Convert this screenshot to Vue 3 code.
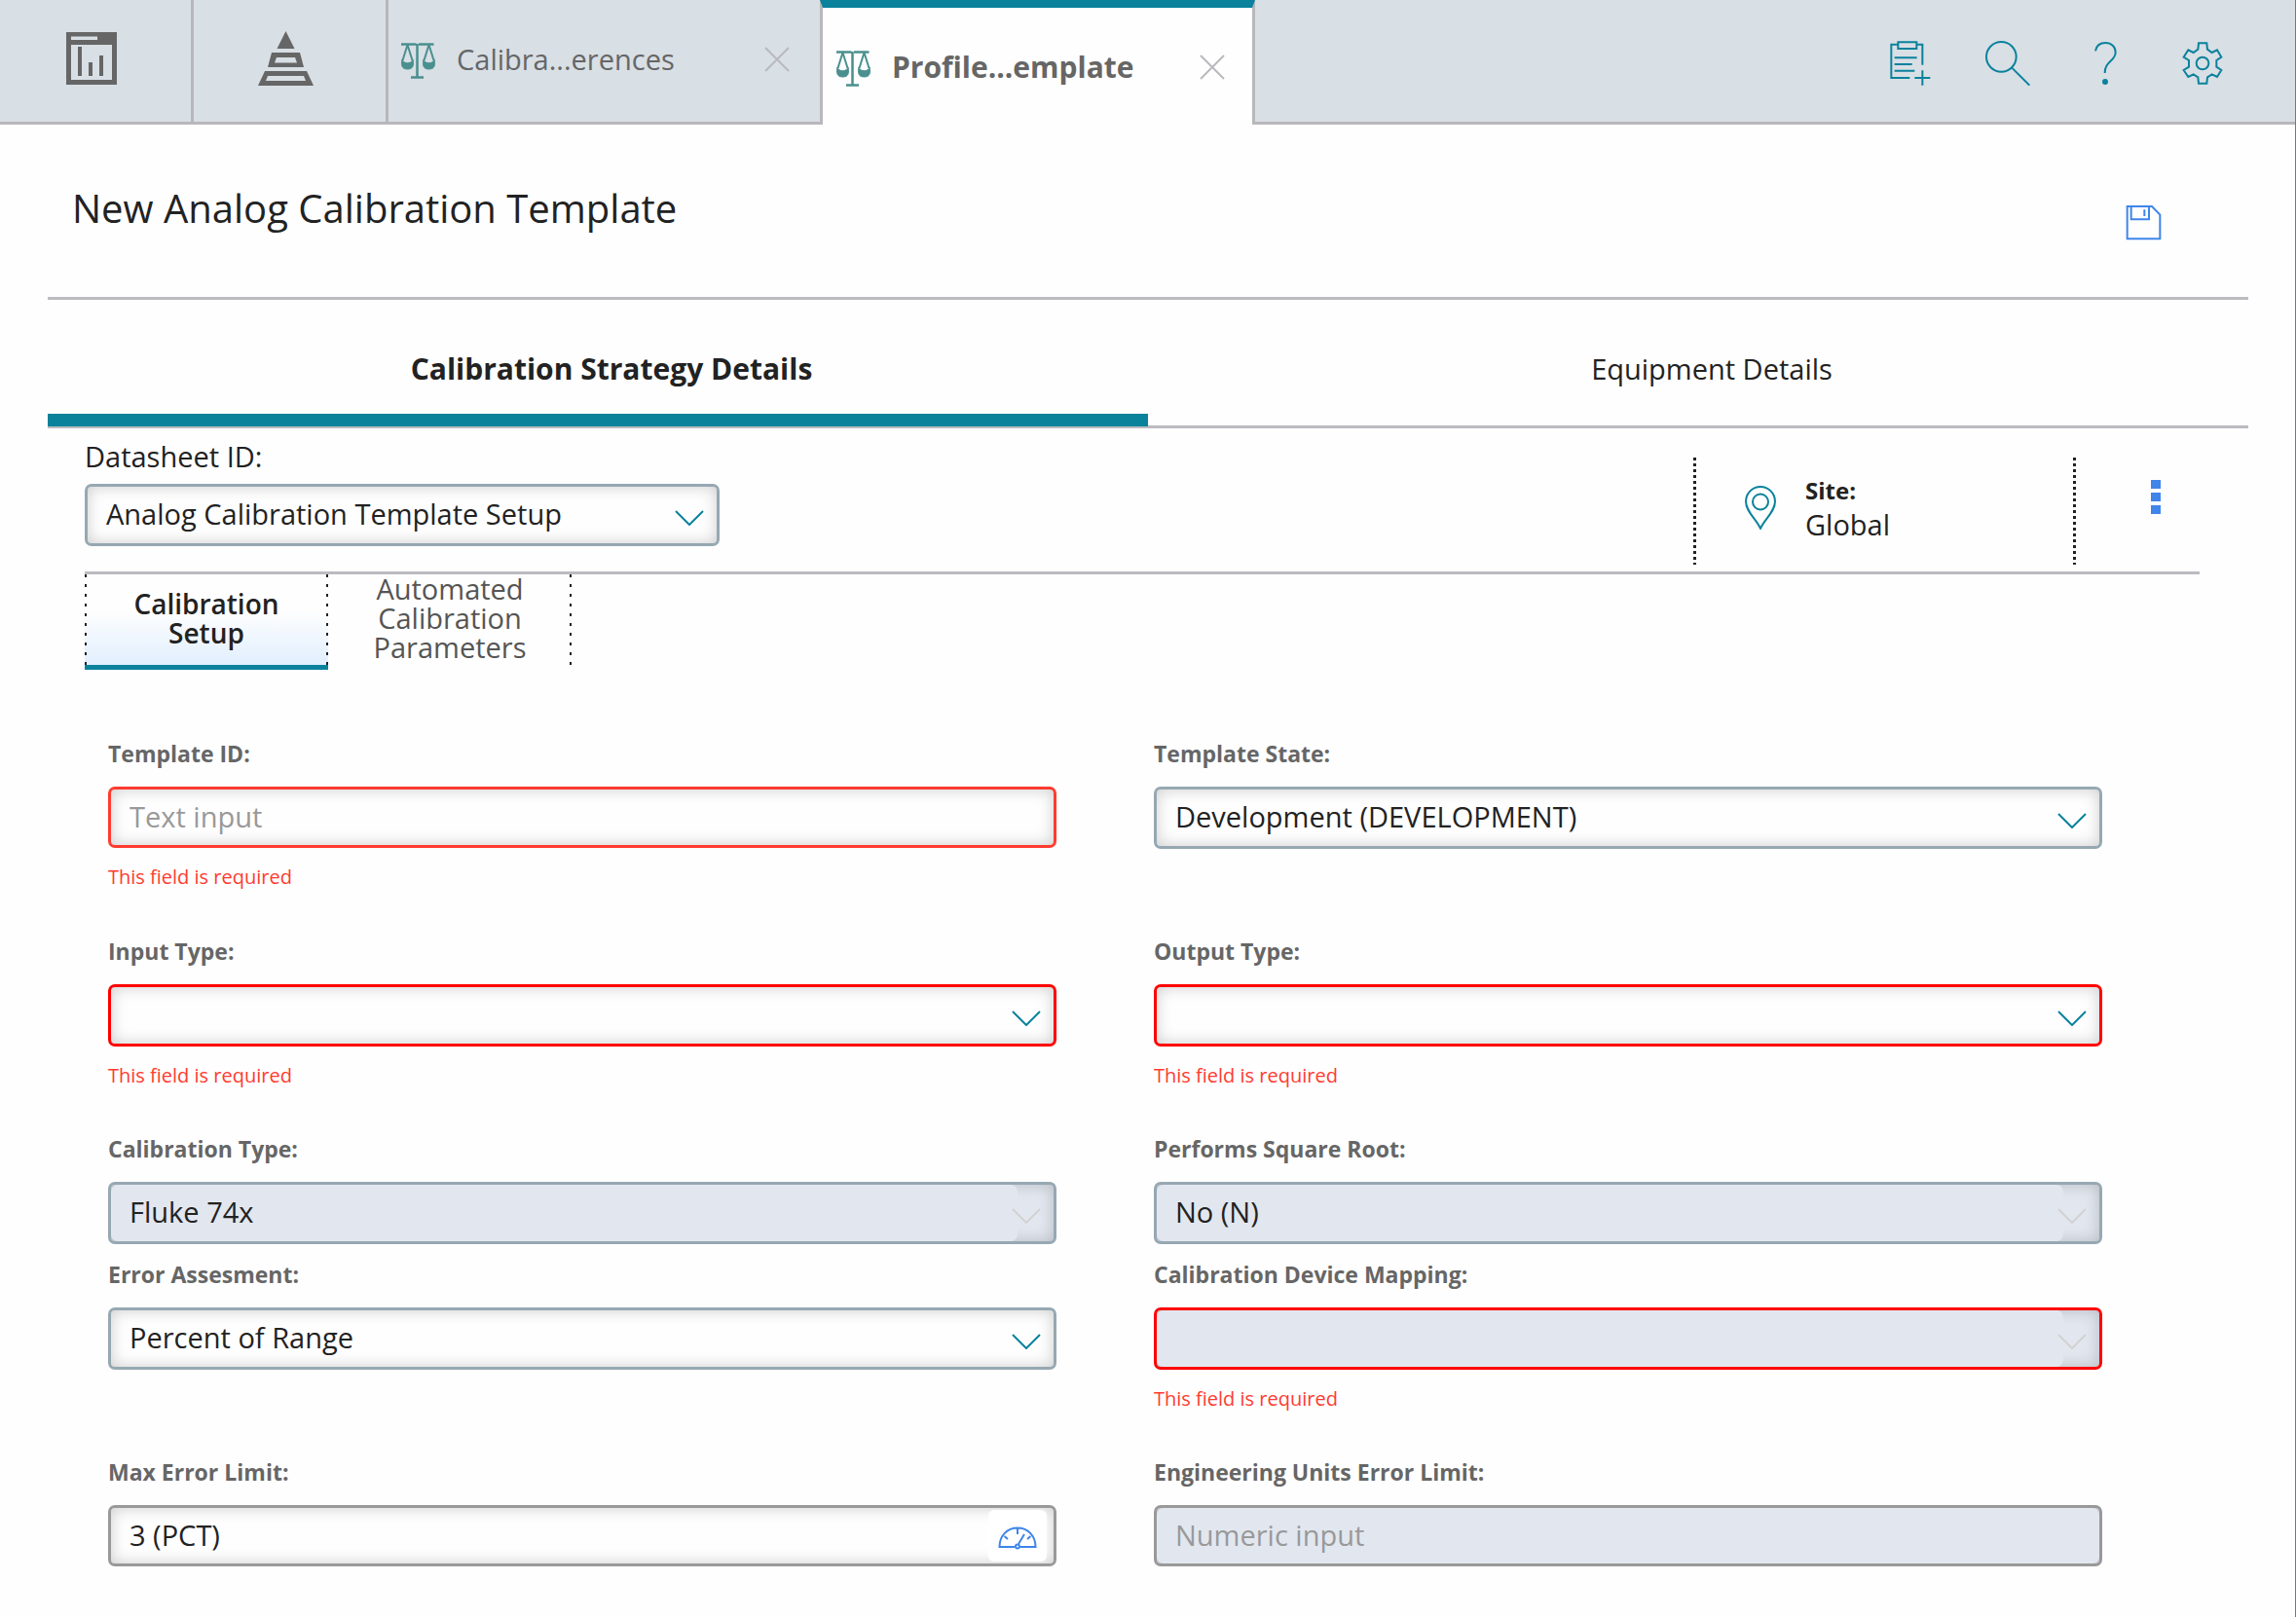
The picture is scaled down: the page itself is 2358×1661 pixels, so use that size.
<script setup>
import { reactive } from 'vue'

const REQUIRED = 'This field is required'

const fields = reactive([
  { id: 'template-id', label: 'Template ID:', kind: 'text', value: '', placeholder: 'Text input', tone: 'invalid', error: REQUIRED, note: true },
  { id: 'template-state', label: 'Template State:', kind: 'select', value: 'Development (DEVELOPMENT)', note: true },
  { id: 'input-type', label: 'Input Type:', kind: 'select', value: '', tone: 'missing', error: REQUIRED, note: true },
  { id: 'output-type', label: 'Output Type:', kind: 'select', value: '', tone: 'missing', error: REQUIRED, note: true },
  { id: 'calibration-type', label: 'Calibration Type:', kind: 'select', value: 'Fluke 74x', disabled: true },
  { id: 'square-root', label: 'Performs Square Root:', kind: 'select', value: 'No (N)', disabled: true },
  { id: 'error-assessment', label: 'Error Assesment:', kind: 'select', value: 'Percent of Range', note: true },
  { id: 'device-mapping', label: 'Calibration Device Mapping:', kind: 'select', value: '', tone: 'missing', disabled: true, error: REQUIRED, note: true },
  { id: 'max-error', label: 'Max Error Limit:', kind: 'text', value: '3 (PCT)', placeholder: '', tone: 'plain', gauge: true },
  { id: 'unit-error', label: 'Engineering Units Error Limit:', kind: 'text', value: '', placeholder: 'Numeric input', tone: 'plain', disabled: true },
])
</script>

<template>
  <div class="page">
    <header class="topbar">
      <button class="home-tab first" type="button" aria-label="Dashboard">
        <svg width="52" height="54" viewBox="0 0 52 54" fill="#666">
          <path fill-rule="evenodd" d="M0 0H52V54H0ZM5 4.500V8H32V4.500ZM5 13V49H47V13Z" />
          <path d="M12 15h4v30h-4zM23 31h4v14h-4zM34 24h4v21h-4z" />
        </svg>
      </button>
      <button class="home-tab" type="button" aria-label="Hierarchy">
        <svg width="57" height="56" viewBox="0 0 57 56" fill="#666">
          <path d="M28.500 0L37.500 18H19.500Z" />
          <path fill-rule="evenodd" d="M14 22H43L47 37H10ZM19 27L17 32.500H40L38 27Z" />
          <path fill-rule="evenodd" d="M7 41H50L57 56H0ZM10 46L8 51H49L47 46Z" />
        </svg>
      </button>
      <div v-for="tab in ['Calibra...erences', 'Profile...emplate']" :key="tab" class="doc-tab" :class="{ current: tab.startsWith('Profile') }">
        <button class="doc-name" type="button">
          <svg width="36" height="37" viewBox="0 0 36 37" fill="none" stroke="#4a908f" stroke-width="2.500">
            <path d="M0 1.500H15.500M18 1.500H33.500M16.500 1V35M10 35.500H23" />
            <path stroke-width="2" d="M6.500 2L1.500 18M6.500 2L11.500 18M28.500 2L23.500 18M28.500 2L33.500 18" />
            <path fill="#4a908f" stroke-width="1" d="M1 17C0 22 0 27 6.500 27S13 22 12 17C11 22 2 22 1 17ZM23 17C22 22 22 27 28.500 27S35 22 34 17C33 22 24 22 23 17Z" />
          </svg>
          <span>{{ tab }}</span>
        </button>
        <button class="close" type="button" aria-label="Close tab">
          <svg width="26" height="26" viewBox="0 0 26 26" fill="none" stroke="#b9b9be" stroke-width="2">
            <path d="M1 1L25 25M25 1L1 25" />
          </svg>
        </button>
      </div>
      <nav class="tools">
        <button type="button" aria-label="New record">
          <svg width="42" height="46" viewBox="122 126 126 138">
            <path d="M144 137H126V240H183M205 137H222V200M147 129.500H204V150H147ZM136 178H205M136 198H190M136 218H198M222 217V263M198 240H246" />
          </svg>
        </button>
        <button type="button" aria-label="Search">
          <svg width="46" height="46" viewBox="416 126 138 138">
            <circle cx="465" cy="175" r="46" />
            <path d="M497 208L552 263" />
          </svg>
        </button>
        <button type="button" aria-label="Help">
          <svg width="24" height="46" viewBox="748 126 72 138">
            <path d="M754 157C757 140 770 132 785 132C803 132 816 144 816 161C816 188 783 188 783 225" />
            <circle cx="784" cy="252" r="6" fill="#0a829c" />
          </svg>
        </button>
        <button type="button" aria-label="Settings">
          <svg width="42" height="44" viewBox="1022 129 126 132">
            <path d="M1073 133H1098L1100 152L1114 162L1130 154L1143 176L1128 186V206L1143 216L1130 237L1114 229L1100 238L1098 257H1073L1071 238L1057 229L1041 237L1027 216L1043 206V186L1027 176L1041 154L1057 162L1071 152Z" />
            <circle cx="1085" cy="195" r="19" />
          </svg>
        </button>
      </nav>
    </header>

    <main>
      <div class="heading">
        <h1>New Analog Calibration Template</h1>
        <button class="save" type="button" aria-label="Save">
          <svg width="37" height="36" viewBox="850 632 111 108" fill="none" stroke="#3f85ea" stroke-width="6">
            <path d="M855 635H931L956 661V735H855ZM867 638V675H922V638M908 645V665" />
          </svg>
        </button>
      </div>

      <div class="main-tabs">
        <button class="active" type="button">Calibration Strategy Details</button>
        <button type="button">Equipment Details</button>
      </div>

      <div class="sheet">
        <div class="sheet-bar">
          <div class="sheet-pick">
            <label for="datasheet">Datasheet ID:</label>
            <div class="box">
              <select id="datasheet"><option>Analog Calibration Template Setup</option></select>
              <svg class="chevron" width="30" height="16" viewBox="0 0 30 16"><path d="M1 1L15 15L29 1" /></svg>
            </div>
          </div>
          <div class="sheet-side">
            <div class="site">
              <svg width="32" height="45" viewBox="0 0 32 45" fill="none" stroke="#0a829c" stroke-width="2">
                <path d="M16 44C12 34 1 27 1 16A15 15 0 0 1 31 16C31 27 20 34 16 44Z" />
                <circle cx="16" cy="16.500" r="8" />
              </svg>
              <div class="site-text"><strong>Site:</strong><span>Global</span></div>
            </div>
            <button class="more" type="button" aria-label="More actions">
              <svg width="10" height="36" viewBox="0 0 10 36" fill="#3f85ea"><path d="M0 0H10V9H0ZM0 13H10V22H0ZM0 26H10V35H0Z" /></svg>
            </button>
          </div>
        </div>

        <div class="sub-tabs">
          <button class="active" type="button">Calibration Setup</button>
          <button type="button">Automated Calibration Parameters</button>
        </div>

        <form class="fields" @submit.prevent>
          <div v-for="f in fields" :key="f.id" class="field" :class="{ noted: f.note }">
            <label :for="f.id">{{ f.label }}</label>
            <div class="box" :class="[f.tone, f.kind, { off: f.disabled }]">
              <template v-if="f.kind === 'select'">
                <select :id="f.id" v-model="f.value" :disabled="f.disabled"><option>{{ f.value }}</option></select>
                <svg class="chevron" width="30" height="16" viewBox="0 0 30 16"><path d="M1 1L15 15L29 1" /></svg>
              </template>
              <template v-else>
                <input :id="f.id" v-model="f.value" type="text" :placeholder="f.placeholder" :disabled="f.disabled">
                <button v-if="f.gauge" class="gauge" type="button" aria-label="Convert units">
                  <svg width="40" height="24" viewBox="0 0 40 24" fill="none" stroke="#3f85ea" stroke-width="2">
                    <path d="M17 21H1.500C1.500 10 9 1.500 20 1.500S38.500 10 38.500 21H23M20 2V8M21 18L27 8M6.500 10L10 13M33.500 10L30 13" />
                    <circle cx="20" cy="20.500" r="2" />
                  </svg>
                </button>
              </template>
            </div>
            <p v-if="f.error" class="error">{{ f.error }}</p>
          </div>
        </form>
      </div>
    </main>
  </div>
</template>

<style>
body {
  background: #fefefe;
}
</style>

<style scoped>
.page {
  --teal: #0a829c;
  --line: #bbbbc0;
  min-height: 100vh;
  box-sizing: border-box;
  border-right: 1px solid #77787a;
  background: #fefefe;
  color: #222;
  font: 29px/40px "Open Sans", sans-serif;
}
.page * {
  box-sizing: border-box;
}
button {
  display: flex;
  align-items: center;
  justify-content: center;
  padding: 0;
  border: 0;
  background: none;
  color: inherit;
  font: inherit;
  cursor: pointer;
}
svg {
  display: block;
  flex: none;
}

.topbar {
  display: flex;
  height: 128px;
  padding-right: 45px;
  border-bottom: 3px solid #b8b7bb;
  background: #d8dfe5;
}
.home-tab {
  width: 200px;
  padding: 0 8px 5px 0;
  border-right: 3px solid #b8b7bb;
}
.home-tab.first {
  width: 199px;
}
.doc-tab {
  display: flex;
  align-items: center;
  justify-content: space-between;
  width: 443px;
  padding: 0 31px 4px 13px;
  color: #666;
}
.doc-name {
  gap: 21px;
}
.doc-name svg {
  margin-top: 3px;
}
.doc-tab.current {
  width: 447px;
  margin-bottom: -3px;
  padding: 2px 28px 0 14px;
  border: 3px solid #b8b7bb;
  border-top: 8px solid var(--teal);
  border-bottom: 0;
  background: #fefefe;
  font-size: 30px;
  font-weight: 700;
}
.tools {
  display: flex;
  margin-left: auto;
}
.tools button {
  width: 100px;
  padding-top: 5px;
}
.tools svg {
  fill: none;
  stroke: var(--teal);
  stroke-width: 6px;
}

main {
  padding: 0 48px 0 49px;
}
.heading {
  display: flex;
  align-items: flex-start;
  justify-content: space-between;
  padding: 59px 66px 34px 25px;
  border-bottom: 3px solid var(--line);
}
h1 {
  margin: 0;
  font-size: 40px;
  line-height: 54px;
  font-weight: 400;
}
.save {
  width: 84px;
  height: 84px;
}

.main-tabs {
  display: flex;
  height: 132px;
  border-bottom: 3px solid var(--line);
}
.main-tabs button {
  flex: 1;
  margin-bottom: -1px;
  padding: 24px 0 0 28px;
  border-bottom: 13px solid transparent;
}
.main-tabs .active {
  border-color: var(--teal);
  font-size: 30px;
  font-weight: 700;
}

.sheet {
  padding: 0 50px 0 38px;
}
.sheet-bar {
  display: flex;
  justify-content: space-between;
  border-bottom: 3px solid var(--line);
}
.sheet-pick {
  display: flex;
  flex-direction: column;
  gap: 8px;
  width: 30%;
  padding: 9px 0 26px;
}
.sheet-side {
  display: flex;
  margin: 30px 0 7px;
}
.site {
  display: flex;
  align-items: center;
  gap: 30px;
  width: 393px;
  padding: 0 0 8px 53px;
  background:
    repeating-linear-gradient(#222 0 3px, transparent 3px 6px) left / 3px 100% no-repeat,
    repeating-linear-gradient(#222 0 3px, transparent 3px 6px) right / 3px 100% no-repeat;
}
.site-text {
  display: flex;
  flex-direction: column;
  line-height: 35px;
}
.site-text strong {
  font-size: 24px;
}
.more {
  width: 88px;
  margin-right: 39px;
  padding: 0 0 28px 76px;
}

.sub-tabs {
  display: flex;
}
.sub-tabs button {
  width: 250px;
  height: 98px;
  padding: 0 40px 3px;
  border-bottom: 5px solid transparent;
  background: repeating-linear-gradient(#222 0 3px, transparent 3px 10px) right top / 2px 100% no-repeat;
  color: #555;
  line-height: 30px;
}
.sub-tabs .active {
  border-color: var(--teal);
  background:
    repeating-linear-gradient(#222 0 3px, transparent 3px 10px) left top / 2px 100% no-repeat,
    repeating-linear-gradient(#222 0 3px, transparent 3px 10px) right top / 2px 100% no-repeat,
    linear-gradient(#fefefe 40%, #e1effe);
  color: #222;
  font-size: 28px;
  font-weight: 600;
}

.box {
  position: relative;
  display: flex;
  height: 64px;
  border: 3px solid #96a8b2;
  border-radius: 7px;
  background: #fefefe;
  box-shadow: inset 0 0 16px rgba(0, 0, 0, 0.2);
}
.box.text {
  height: 63px;
}
.box.plain {
  border-color: #999;
}
.box.invalid {
  border-color: #ff3b30;
}
.box.missing {
  border-color: #f00;
}
.box.off {
  background: #e2e7ef;
}
select,
input {
  appearance: none;
  flex: 1;
  min-width: 0;
  margin: 0;
  padding: 0 19px 2px;
  border: 0;
  border-radius: 7px;
  outline: 0;
  background: transparent;
  color: #222;
  font: inherit;
  opacity: 1;
}
input::placeholder {
  color: #999;
  opacity: 1;
}
.off select,
.off input {
  background: #e2e7ef;
}
.off select {
  margin-right: 37px;
}
.chevron {
  position: absolute;
  top: 24px;
  right: 13px;
  fill: none;
  stroke: var(--teal);
  stroke-width: 2px;
  pointer-events: none;
}
.off .chevron {
  stroke: #d2d2d2;
}
.gauge {
  width: 60px;
  margin: 2px 7px 2px 0;
  padding-top: 4px;
  border-radius: 6px;
  background: #fff;
}

.fields {
  display: grid;
  grid-template-columns: 1fr 1fr;
  column-gap: 100px;
  padding: 70px 100px 40px 24px;
}
.field {
  padding-bottom: 15px;
}
.field.noted {
  min-height: 203px;
}
.field label {
  display: block;
  margin-bottom: 18px;
  color: #666;
  font-size: 23px;
  line-height: 32px;
  font-weight: 700;
}
.error {
  margin: 16px 0 0;
  color: #ff3b30;
  font-size: 20px;
  line-height: 28px;
}
</style>
